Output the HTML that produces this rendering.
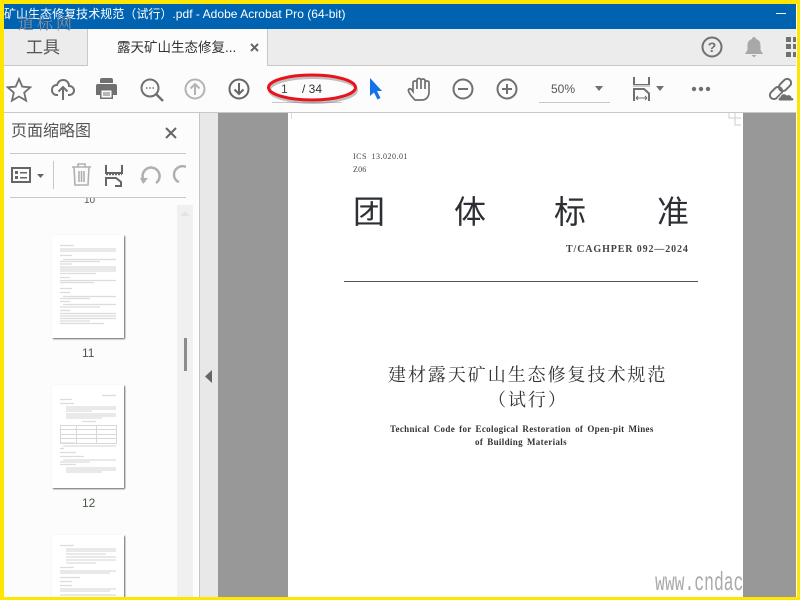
<!DOCTYPE html>
<html><head><meta charset="utf-8">
<style>
html,body{margin:0;padding:0;background:#fff}
#r{position:relative;width:800px;height:600px;overflow:hidden;background:#fff;font-family:"Liberation Sans","Noto Sans CJK SC",sans-serif}
#r div,#r svg{position:absolute}
.t{white-space:nowrap;line-height:1}
.ser{font-family:"Liberation Serif","Noto Sans CJK SC",serif}
.th{background:#fff;box-shadow:1px 1px 1.5px #666;overflow:hidden}
.th path{fill:none;stroke:#dcdcdc;stroke-width:1.2}
</style></head><body><div id="r">
<!-- title -->
<div style="left:0;top:4px;width:797px;height:25px;background:#0063b1"></div>
<div class="t" style="left:4px;top:6px;font-size:12px;color:#fff;line-height:17px;width:400px;overflow:hidden;letter-spacing:.03px">矿山生态修复技术规范（试行）.pdf - Adobe Acrobat Pro (64-bit)</div>
<div style="left:776px;top:13px;width:10px;height:1px;background:#fff"></div>
<!-- tab bar -->
<div style="left:4px;top:29px;width:793px;height:36px;background:#ececec"></div>
<div style="left:4px;top:65px;width:793px;height:1px;background:#c8c8c8"></div>
<div style="left:87px;top:29px;width:181px;height:37px;background:#fcfcfc;border-left:1px solid #c8c8c8;border-right:1px solid #c8c8c8;box-sizing:border-box"></div>
<div class="t" style="left:18px;top:15px;font-size:16px;color:#8a8f98;letter-spacing:3px;font-family:'Noto Serif CJK SC',serif">道标网</div>
<div class="t" style="left:26px;top:39px;font-size:17px;color:#555">工具</div>
<div class="t" style="left:117px;top:41px;font-size:13.500px;color:#333">露天矿山生态修复...</div>
<svg style="left:250px;top:43px" width="9" height="9"><path d="M1 1L8 8M8 1L1 8" stroke="#666" stroke-width="2"/></svg>
<svg style="left:700px;top:35px" width="24" height="24"><circle cx="12" cy="12" r="9.500" fill="none" stroke="#707070" stroke-width="2"/><text x="12" y="17" text-anchor="middle" font-size="14" font-weight="bold" fill="#707070" font-family="Liberation Sans">?</text></svg>
<svg style="left:744px;top:37px" width="20" height="21"><path d="M10 0c1.200 0 2 1 2 2c3.500 1 4.500 3.500 4.500 6.500V13l2.500 4H1l2.500-4V8.500C3.500 5.500 4.500 3 8 2c0-1 .8-2 2-2zM7.500 18h5l-2.500 2.500z" fill="#a8a8a8"/></svg>
<svg style="left:786px;top:37px" width="11" height="20" fill="#707070"><rect x="0" y="0" width="5" height="5"/><rect x="7" y="0" width="4" height="5"/><rect x="0" y="7" width="5" height="5"/><rect x="7" y="7" width="4" height="5"/><rect x="0" y="15" width="5" height="5"/><rect x="7" y="15" width="4" height="5"/></svg>
<!-- toolbar -->
<div style="left:4px;top:66px;width:793px;height:46px;background:#fcfcfc"></div>
<div style="left:4px;top:112px;width:793px;height:1px;background:#c8c8c8"></div>
<svg style="left:6px;top:77px" width="26" height="26"><path d="M13 2l3.300 7.600 8 .7-6.100 5.400 1.900 8L13 19.500 5.900 23.700l1.900-8L1.700 10.300l8-.7z" fill="none" stroke="#707070" stroke-width="1.800"/></svg>
<svg style="left:51px;top:77px" width="24" height="24"><path d="M7 18H6c-3 0-5-2-5-5s2-5 5-5c1-3 3-5 6-5 4 0 6 3 6 6 3 0 5 2 5 4.500S21 18 18 18h-1" fill="none" stroke="#707070" stroke-width="2"/><path d="M12 23V11M7.500 14.500L12 10l4.500 4.500" fill="none" stroke="#707070" stroke-width="2"/></svg>
<svg style="left:95px;top:77px" width="23" height="23"><path d="M5 3a2 2 0 0 1 2-2h9a2 2 0 0 1 2 2v3H5zM3 7h17a2 2 0 0 1 2 2v9h-4v4H5v-4H1V9a2 2 0 0 1 2-2z" fill="#707070"/><rect x="6.500" y="13.500" width="10" height="7" fill="#fcfcfc"/><rect x="8" y="15.500" width="7" height="1" fill="#707070"/><rect x="8" y="17.500" width="7" height="1" fill="#707070"/></svg>
<svg style="left:140px;top:78px" width="24" height="24"><circle cx="10" cy="10" r="8.500" fill="none" stroke="#707070" stroke-width="2"/><path d="M16 16l7 7" stroke="#707070" stroke-width="2.500"/><path d="M6 10h1.500M9.300 10h1.500M12.500 10h1.500" stroke="#707070" stroke-width="1.500"/></svg>
<svg style="left:184px;top:78px" width="22" height="22"><circle cx="11" cy="11" r="9.500" fill="none" stroke="#b4b4b4" stroke-width="2"/><path d="M11 17V6M6.500 10.500L11 6l4.500 4.500" fill="none" stroke="#b4b4b4" stroke-width="2"/></svg>
<svg style="left:228px;top:78px" width="22" height="22"><circle cx="11" cy="11" r="9.500" fill="none" stroke="#666" stroke-width="2"/><path d="M11 5v11M6.500 11.500L11 16l4.500-4.500" fill="none" stroke="#666" stroke-width="2"/></svg>
<div style="left:272px;top:102px;width:70px;height:1px;background:#c8c8c8"></div>
<div class="t" style="left:281px;top:83px;font-size:12px;color:#444">1</div>
<div class="t" style="left:302px;top:83px;font-size:12px;color:#333">/ 34</div>
<svg style="left:262px;top:70px" width="100" height="36"><ellipse cx="51" cy="20" rx="43.500" ry="12.500" fill="none" stroke="#777" stroke-width="3" opacity=".45"/><ellipse cx="50" cy="17.500" rx="43.500" ry="12.500" fill="none" stroke="#e8141c" stroke-width="3"/></svg>
<svg style="left:368px;top:77px" width="16" height="24"><path d="M2 1l12 13H9l3.500 7-3 1.500L6 15.500 2 19z" fill="#1473e6"/></svg>
<svg style="left:407px;top:76px" width="24" height="26"><path d="M8 24C5 21 2 17 1.500 15C1 13 3 12 4.500 13.500L6 15.500V6.500C6 4.500 10 4.500 10 6.500V4C10 2 14 2 14 4V4.500C14 2.500 18 2.500 18 4.500V6.500C18 4.500 22 4.500 22 6.500V16C22 21 19 24 15 24ZM10 6.500V13M14 4.500V13M18 6.500V13" fill="none" stroke="#707070" stroke-width="1.700"/></svg>
<svg style="left:451px;top:77px" width="24" height="24"><circle cx="12" cy="12" r="9.500" fill="none" stroke="#707070" stroke-width="2"/><path d="M7 12h10" stroke="#707070" stroke-width="2"/></svg>
<svg style="left:495px;top:77px" width="24" height="24"><circle cx="12" cy="12" r="9.500" fill="none" stroke="#707070" stroke-width="2"/><path d="M7 12h10M12 7v10" stroke="#707070" stroke-width="2"/></svg>
<div class="t" style="left:551px;top:83px;font-size:12px;color:#555">50%</div>
<svg style="left:594px;top:86px" width="10" height="6"><path d="M1 0h8L5 5z" fill="#707070"/></svg>
<div style="left:539px;top:102px;width:71px;height:1px;background:#c8c8c8"></div>
<svg style="left:632px;top:76px" width="19" height="26"><path d="M2 1v8h15V1" fill="none" stroke="#707070" stroke-width="2"/><path d="M1 10h17" stroke="#ccc" stroke-width="2"/><path d="M2 25V13h10l5 4.500V25" fill="none" stroke="#707070" stroke-width="2"/><path d="M4 22h11M4 22l2-2M4 22l2 2M15 22l-2-2M15 22l-2 2" stroke="#707070" stroke-width="1" fill="none"/></svg>
<svg style="left:655px;top:86px" width="10" height="6"><path d="M1 0h8L5 5z" fill="#707070"/></svg>
<svg style="left:691px;top:85px" width="20" height="8" fill="#707070"><circle cx="3" cy="4" r="2.200"/><circle cx="10" cy="4" r="2.200"/><circle cx="17" cy="4" r="2.200"/></svg>
<svg style="left:767px;top:77px" width="30" height="25"><g fill="none" stroke="#707070" stroke-width="2"><rect x="2" y="12" width="14" height="8" rx="4" transform="rotate(-45 9 16)"/><rect x="11" y="4" width="14" height="8" rx="4" transform="rotate(-45 18 8)"/></g><path d="M13 24c-2.500 0-2.500-3.500 0-4 .5-3 4.500-4.500 7-2 2.500-1 5 .5 5 2.500 2.500 0 2.500 3.500 0 3.500z" fill="#707070" stroke="#fcfcfc" stroke-width="1"/></svg>
<!-- left panel -->
<div style="left:4px;top:113px;width:194px;height:484px;background:#fcfcfc"></div>
<div class="t" style="left:11px;top:124px;font-size:16px;color:#555">页面缩略图</div>
<svg style="left:165px;top:127px" width="12" height="12"><path d="M1 1L11 11M11 1L1 11" stroke="#666" stroke-width="2"/></svg>
<div style="left:10px;top:153px;width:176px;height:1px;background:#c8c8c8"></div>
<div style="left:10px;top:197px;width:176px;height:1px;background:#c8c8c8"></div>
<div style="left:53px;top:161px;width:1px;height:28px;background:#c8c8c8"></div>
<svg style="left:11px;top:166px" width="21" height="19"><rect x="1" y="2" width="18" height="14" fill="none" stroke="#666" stroke-width="2"/><rect x="4" y="5" width="3" height="3" fill="#666"/><rect x="4" y="10" width="3" height="3" fill="#666"/><rect x="9" y="6" width="7" height="1.500" fill="#666"/><rect x="9" y="11" width="7" height="1.500" fill="#666"/></svg>
<svg style="left:36px;top:174px" width="9" height="6"><path d="M1 0h7L4.500 4z" fill="#666"/></svg>
<svg style="left:71px;top:163px" width="21" height="24"><path d="M1 4h19M7 4V1h7v3M3 4l1 18h13l1-18M8 8v11M10.500 8v11M13 8v11" fill="none" stroke="#b0b0b0" stroke-width="1.600"/></svg>
<svg style="left:105px;top:164px" width="19" height="23"><path d="M1 1v8h16V1" fill="none" stroke="#666" stroke-width="2"/><path d="M1 10.500h16" stroke="#666" stroke-width="1.500" stroke-dasharray="2 1"/><path d="M1 13v9M1 14h10l5 4v4h-6" fill="none" stroke="#666" stroke-width="2"/></svg>
<svg style="left:138px;top:165px" width="24" height="22"><path d="M6 17A8.500 8.500 0 1 1 17 18" fill="none" stroke="#b0b0b0" stroke-width="2.500" transform="translate(1 0)"/><path d="M2 13h8l-5 6z" fill="#b0b0b0"/></svg>
<svg style="left:172px;top:165px" width="14" height="22"><path d="M14 2A8.500 8.500 0 0 0 2 10c0 3 2 6 5 7" fill="none" stroke="#b0b0b0" stroke-width="2.500"/></svg>
<div class="t" style="left:84px;top:198px;font-size:10px;color:#555;height:6px;overflow:hidden;line-height:6px">10</div>
<!-- thumbs -->
<div class="th" style="left:52px;top:235px;width:72px;height:103px"><svg width="72" height="103" style="left:0;top:0"><path d="M8 10.500h14M8 14h56M8 16h56M8 20.500h12M11 24.500h53M8 26.500h40M8 29h12M8 32h56M8 34h56M8 36h56M8 38.500h36M8 42.500h10M8 45.500h56M8 47.500h34M8 53.500h12M8 57.500h10M11 61.500h53M8 63.500h30M8 66.500h10M11 69.500h53M8 72h40M8 75.500h10M8 78.500h56M8 81h56M8 83.500h56M8 86h30M8 88.500h44"/></svg></div>
<div class="t" style="left:82px;top:347px;font-size:12px;color:#4a5a4a">11</div>
<div class="th" style="left:52px;top:385px;width:72px;height:103px"><svg width="72" height="103" style="left:0;top:0"><path d="M50 10.500h14M8 14.500h12M8 18.500h14M14 22h50M14 24h50M14 26h26M14 29h50M14 31h50M14 33h36M30 36.500h14M8 58h14M11 61h53M8 63.500h4M8 67.500h16M8 71.500h24M11 75h53M8 77h30M8 79.500h16M14 83h50M14 85h50M14 87h36"/><path d="M8.500 40.500h56v18h-56zM8.500 44.500h56M8.500 49.500h56M8.500 53.500h56M24.500 40.500v18M44.500 40.500v18" style="stroke:#d8d8d8;stroke-width:1"/></svg></div>
<div class="t" style="left:82px;top:497px;font-size:12px;color:#4a5a4a">12</div>
<div class="th" style="left:52px;top:535px;width:72px;height:70px"><svg width="72" height="62" style="left:0;top:0"><path d="M8 10.500h14M14 14h50M14 16h50M14 19h40M14 22h50M14 25h50M14 28h30M8 32.500h14M8 36h56M8 38h50M8 42.500h20M8 46.500h12M8 50.500h12M8 54h56M8 56h50M8 60h56"/></svg></div>
<!-- scrollbar -->
<div style="left:177px;top:205px;width:16px;height:392px;background:#f0f0f0"></div>
<svg style="left:180px;top:210px" width="10" height="7"><path d="M0 6L5 1l5 5z" fill="#e4e4e4"/></svg>
<div style="left:184px;top:338px;width:3px;height:33px;background:#8c8c8c"></div>
<div style="left:199px;top:113px;width:1px;height:484px;background:#c4c4c4"></div>
<div style="left:200px;top:113px;width:18px;height:484px;background:#e8e8e8"></div>
<svg style="left:205px;top:370px" width="8" height="13"><path d="M7 0v13L0 6.500z" fill="#666"/></svg>
<!-- doc -->
<div style="left:218px;top:113px;width:70px;height:484px;background:#989898"></div>
<div style="left:288px;top:113px;width:455px;height:484px;background:#fff"></div>
<svg style="left:290px;top:113px" width="4" height="6"><path d="M1.500 0v6" stroke="#ddd"/></svg>
<svg style="left:728px;top:113px" width="14" height="13"><path d="M1 0v5h6V0M7 5h6M7 5v7h6" fill="none" stroke="#ccc"/></svg>
<div class="t ser" style="left:353px;top:153px;font-size:8px;color:#444;letter-spacing:.5px;word-spacing:2px">ICS 13.020.01</div>
<div class="t ser" style="left:353px;top:166px;font-size:8px;color:#444;letter-spacing:.2px">Z06</div>
<div class="t" style="left:353px;top:196px;font-size:32px;color:#2c2f33">团</div>
<div class="t" style="left:454px;top:196px;font-size:32px;color:#2c2f33">体</div>
<div class="t" style="left:554px;top:196px;font-size:32px;color:#2c2f33">标</div>
<div class="t" style="left:657px;top:196px;font-size:32px;color:#2c2f33">准</div>
<div class="t ser" style="left:566px;top:245px;font-size:10px;font-weight:bold;color:#444;letter-spacing:.88px">T/CAGHPER 092—2024</div>
<div style="left:344px;top:281px;width:354px;height:1px;background:#555"></div>
<div class="t" style="left:388px;top:366px;font-size:18px;color:#333;letter-spacing:1.950px;font-family:'Liberation Serif','Noto Serif CJK SC',serif">建材露天矿山生态修复技术规范</div>
<div class="t" style="left:488px;top:391px;font-size:18px;color:#333;letter-spacing:1.950px;font-family:'Liberation Serif','Noto Serif CJK SC',serif">（试行）</div>
<div class="t ser" style="left:390px;top:425px;font-size:9px;font-weight:bold;color:#333;letter-spacing:.33px;word-spacing:1.500px">Technical Code for Ecological Restoration of Open-pit Mines</div>
<div class="t ser" style="left:475px;top:438px;font-size:9px;font-weight:bold;color:#333;letter-spacing:.33px;word-spacing:1.500px">of Building Materials</div>
<div class="t" style="left:655px;top:570px;font-size:26px;color:#aaa;font-family:'Liberation Mono',monospace;transform:scaleX(.63);transform-origin:0 0">www.cndac</div>
<div style="left:743px;top:113px;width:53px;height:484px;background:#989898"></div>
<!-- yellow frame -->
<div style="left:796px;top:4px;width:1px;height:593px;background:#fff"></div>
<div style="left:0;top:0;width:800px;height:4px;background:#ffe600"></div>
<div style="left:0;top:597px;width:800px;height:3px;background:#ffe600"></div>
<div style="left:0;top:0;width:4px;height:600px;background:#ffe600"></div>
<div style="left:797px;top:0;width:3px;height:600px;background:#ffe600"></div>
</div></body></html>
